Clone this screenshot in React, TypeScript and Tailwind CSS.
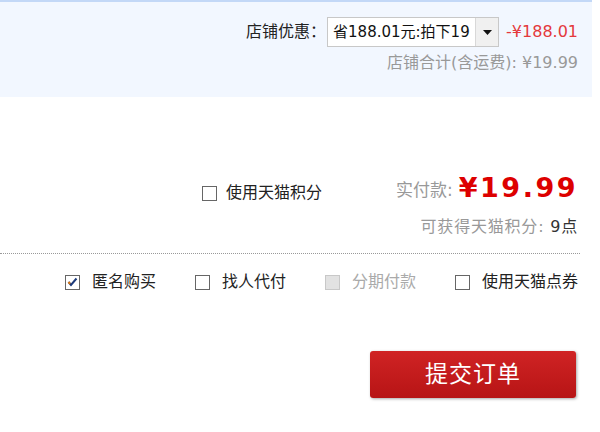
import React from "react";

const font = { fontFamily: '"DejaVu Sans", "Noto Sans CJK SC", sans-serif' };

function Box({ checked, disabled }: { checked?: boolean; disabled?: boolean }) {
  return (
    <span
      className={
        "inline-flex w-[15px] h-[15px] shrink-0 items-center justify-center border " +
        (disabled ? "border-[#c8c8c8] bg-[#e2e2e2]" : "border-[#666] bg-white")
      }
    >
      {checked && (
        <svg width="11" height="10" viewBox="0 0 11 10">
          <path d="M1.5 5 L4 8 L9.5 1.5" stroke="#1c3a7a" strokeWidth="2" fill="none" />
          <path d="M1.5 5 L3 6.8" stroke="#e07a10" strokeWidth="2" fill="none" />
        </svg>
      )}
    </span>
  );
}

export default function App() {
  return (
    <div className="w-[600px] h-[432px] bg-white overflow-hidden" style={font}>
      <div className="w-[592px]">
        <div className="h-[97px] bg-[#f2f7ff] border-t-2 border-[#c3d8f7] pr-[14px] pt-[15px] flex flex-col items-end">
          <div className="flex items-center">
            <span className="text-[16px] text-[#222] mr-[1px]">店铺优惠：</span>
            <div className="w-[172px] h-[30px] border border-[#c8c8c8] bg-white flex items-stretch">
              <span className="flex-1 flex items-center pl-[5px] text-[15px] text-[#111] whitespace-nowrap overflow-hidden">省188.01元:拍下19</span>
              <span className="w-[23px] border-l border-[#d8d8d8] bg-[#f0f0f0] flex items-center justify-center">
                <svg width="9" height="5" viewBox="0 0 9 5"><path d="M0 0 H9 L4.5 5 Z" fill="#111" /></svg>
              </span>
            </div>
            <span className="ml-[7px] text-[16px] text-[#e4393c]">-¥188.01</span>
          </div>
          <div className="mt-[4px] text-[16px] text-[#999]">店铺合计(含运费): ¥19.99</div>
        </div>

        <div className="pr-[14px] pt-[72px] flex flex-col items-end">
          <div className="flex items-center h-[36px]">
            <label className="flex items-center mt-[12px]">
              <Box />
              <span className="ml-[9px] text-[16px] text-[#222]">使用天猫积分</span>
            </label>
            <span className="ml-[74px] mt-[8px] text-[17px] text-[#999]">实付款:</span>
            <span className="ml-[6px] text-[27px] font-bold text-[#dd0000] tracking-[2.5px] leading-none">
              ¥19.99
            </span>
          </div>
          <div className="mt-[10px] text-[16px] text-[#999] tracking-[0.8px]">
            可获得天猫积分: <span className="text-[#333]">9点</span>
          </div>
        </div>

        <div className="mt-[14px] w-[580px] border-t border-dotted border-[#999]"></div>

        <div className="pr-[14px] mt-[18px] flex justify-end items-center gap-[39px] h-[20px] text-[16px]">
          <label className="flex items-center">
            <Box checked />
            <span className="ml-[12px] text-[#222]">匿名购买</span>
          </label>
          <label className="flex items-center">
            <Box />
            <span className="ml-[12px] text-[#222]">找人代付</span>
          </label>
          <label className="flex items-center">
            <Box disabled />
            <span className="ml-[12px] text-[#aaa]">分期付款</span>
          </label>
          <label className="flex items-center">
            <Box />
            <span className="ml-[12px] text-[#222]">使用天猫点券</span>
          </label>
        </div>

        <div className="pr-[16px] mt-[59px] flex justify-end">
          <button className="w-[206px] h-[47px] rounded-[3px] bg-gradient-to-b from-[#d02324] to-[#b71415] shadow-[1px_1px_3px_rgba(0,0,0,0.35)] text-white text-[23px] tracking-[1px]">
            提交订单
          </button>
        </div>
      </div>
    </div>
  );
}
